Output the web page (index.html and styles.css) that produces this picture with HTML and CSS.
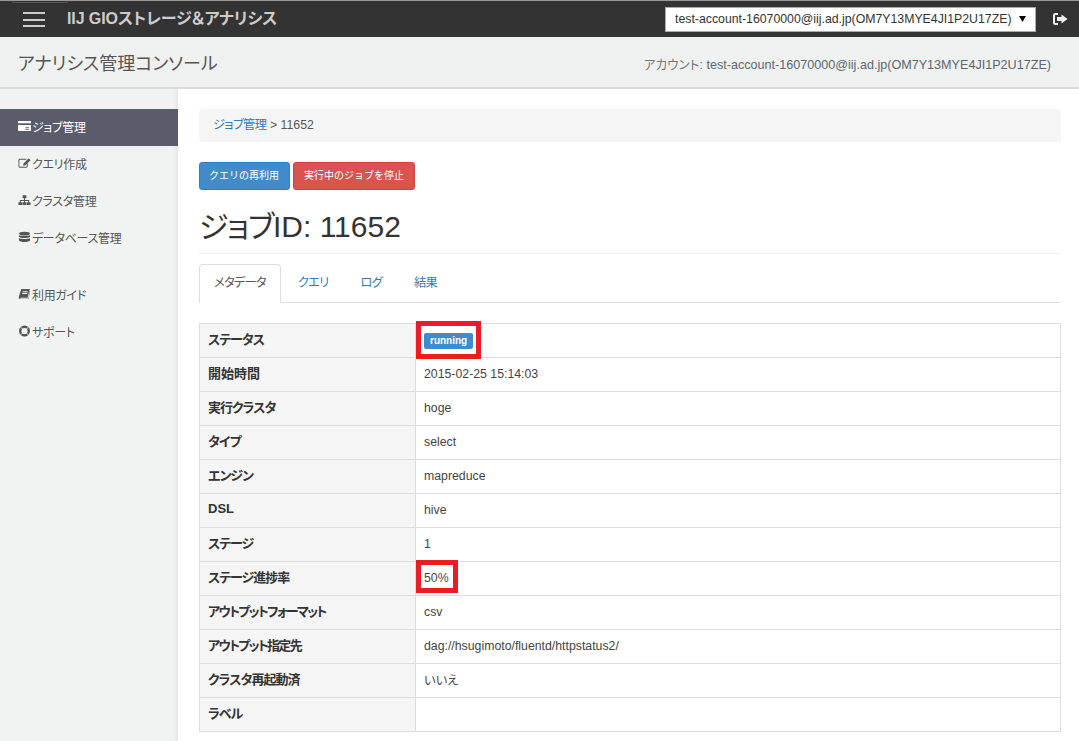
FILE: index.html
```html
<!DOCTYPE html>
<html>
	<head>
		<meta charset="UTF-8">
		<title>ジョブ詳細</title>
		<link rel="stylesheet" href="styles.css">
	</head>
	<body>
		<div class="navbar">
			<a href="#" class="burger"><span></span><span></span><span></span></a>
			<a href="#" class="brand">IIJ GIOストレージ＆アナリシス</a>
			<div class="account-select">
				<span>test-account-16070000@iij.ad.jp(OM7Y13MYE4JI1P2U17ZE)</span>
				<svg class="caret" viewBox="0 0 8 7"><path d="M0 0h8L4 7z"/></svg>
			</div>
			<a href="#" class="logout">
				<svg viewBox="0 0 16 14"><path d="M6 1H3.500A2.500 2.500 0 0 0 1 3.500v7A2.500 2.500 0 0 0 3.500 13H6v-2H3.500a.5.5 0 0 1-.5-.5v-7a.5.5 0 0 1 .5-.5H6z"/><path d="M9.500 2.500 15.500 7l-6 4.500V9H5V5h4.500z"/></svg>
			</a>
		</div>
		<div class="subheader">
			<h2>アナリシス管理コンソール</h2>
			<p>アカウント: <span>test-account-16070000@iij.ad.jp(OM7Y13MYE4JI1P2U17ZE)</span></p>
		</div>
		<div class="wrapper">
			<ul class="sidebar">
				<li class="current"><a href="#">
					<svg viewBox="0 0 14 12"><path d="M0 1.500A1 1 0 0 1 1 .5h12a1 1 0 0 1 1 1V3H0zM0 5h14v5.500a1 1 0 0 1-1 1H1a1 1 0 0 1-1-1zm8 2v1h4V7zm0 2v1h4V9z" fill-rule="evenodd"/></svg>ジョブ管理</a></li>
				<li><a href="#">
					<svg viewBox="0 0 14 12"><path d="M2 1.500h7v1H2a.5.5 0 0 0-.5.500v6.500A.5.5 0 0 0 2 10h7a.5.5 0 0 0 .5-.5V7l1-1v3.500A1.500 1.500 0 0 1 9 11H2A1.500 1.500 0 0 1 .5 9.500V3A1.500 1.500 0 0 1 2 1.500z"/><path d="M11.500 1 13.500 3 8 8.500 5.500 9 6 6.500z"/></svg>クエリ作成</a></li>
				<li><a href="#">
					<svg viewBox="0 0 14 12"><path d="M5 1h4v3H7.500v2H12v2.500h1.500V11.500h-4V8.500H11V7H7.500v1.500H9v3H5v-3h1.500V7H3v1.500h1.500v3h-4v-3H2V6h4.500V4H5z"/></svg>クラスタ管理</a></li>
				<li><a href="#">
					<svg viewBox="0 0 14 12"><ellipse cx="7" cy="2.300" rx="6" ry="2"/><path d="M1 3.800c1 1.500 11 1.500 12 0v2c-1 1.800-11 1.800-12 0zM1 7c1 1.500 11 1.500 12 0v2.500c-.5 2.600-11.500 2.600-12 0z"/></svg>データベース管理</a></li>
				<li class="gap"><a href="#">
					<svg viewBox="0 0 14 12"><path d="M3.500.5H13l-.5 1-2.200 8.500H3a1 1 0 0 0-.7 1h8.400l.6-1 1.200-7.500.5.500-1.700 8.500H2.500C.5 11.500.7 9.500 1 8.500zM5 3v1h5.500V3zm-.5 2v1H10V5z" fill-rule="evenodd"/></svg>利用ガイド</a></li>
				<li><a href="#">
					<svg viewBox="0 0 14 14"><circle cx="7" cy="7" r="5" fill="none" stroke="currentColor" stroke-width="2.800"/><path d="M2.500 2.500l2.500 2.500M11.500 2.500 9 5M2.500 11.500 5 9M11.500 11.500 9 9" stroke="#f1f3f3" stroke-width="1.100"/></svg>サポート</a></li>
			</ul>
			<div class="content">
				<div class="breadcrumb"><a href="#">ジョブ管理</a> &gt; 11652</div>
				<div class="actions">
					<a href="#" class="btn btn-primary">クエリの再利用</a>
					<a href="#" class="btn btn-danger">実行中のジョブを停止</a>
				</div>
				<h1><span>ジョブ</span>ID: 11652</h1>
				<ul class="tabs">
					<li class="active"><a href="#">メタデータ</a></li>
					<li><a href="#">クエリ</a></li>
					<li><a href="#">ログ</a></li>
					<li><a href="#">結果</a></li>
				</ul>
				<table class="meta">
					<tr><th>ステータス</th><td><span class="label">running</span><i class="mark mark-status"></i></td></tr>
					<tr><th class="wide">開始時間</th><td>2015-02-25 15:14:03</td></tr>
					<tr><th>実行クラスタ</th><td>hoge</td></tr>
					<tr><th>タイプ</th><td>select</td></tr>
					<tr><th>エンジン</th><td>mapreduce</td></tr>
					<tr><th class="wide">DSL</th><td>hive</td></tr>
					<tr><th>ステージ</th><td>1</td></tr>
					<tr><th>ステージ進捗率</th><td>50%<i class="mark mark-rate"></i></td></tr>
					<tr><th class="tight">アウトプットフォーマット</th><td>csv</td></tr>
					<tr><th class="tight">アウトプット指定先</th><td>dag://hsugimoto/fluentd/httpstatus2/</td></tr>
					<tr><th>クラスタ再起動済</th><td>いいえ</td></tr>
					<tr><th>ラベル</th><td></td></tr>
				</table>
			</div>
		</div>
	</body>
</html>
```
FILE: styles.css
```css
* {
	box-sizing: border-box;
}
html, body {
	height: 741px;
	overflow: hidden;
}
body {
	margin: 0;
	background-color: #fff;
	color: #333;
	font-family: "Liberation Sans", "Noto Sans CJK JP", sans-serif;
	font-size: 12.3px;
	font-feature-settings: "palt";
}
a {
	text-decoration: none;
	color: #337ab7;
}
ul {
	margin: 0;
	padding: 0;
	list-style: none;
}

/* top bar */
.navbar {
	height: 37px;
	display: flex;
	align-items: center;
	background-color: #333;
	border-top: 1px solid #999;
}
.burger {
	width: 56px;
	height: 34px;
	margin-left: 12px;
	padding: 9px 11px;
	display: flex;
	flex-direction: column;
	justify-content: space-between;
	border-top: 1px solid #555;
}
.burger span {
	display: block;
	width: 22px;
	height: 2px;
	background-color: #ccc;
}
.brand {
	margin-left: -1px;
	padding-bottom: 4px;
	color: #ccc;
	font-size: 16px;
	font-weight: bold;
	letter-spacing: -.1px;
}
.account-select {
	width: 371px;
	height: 25px;
	margin-left: auto;
	padding: 0 9px;
	display: flex;
	align-items: center;
	justify-content: space-between;
	background-color: #fff;
	border: 1px solid #aaa;
}
.caret {
	width: 7px;
	height: 6px;
}
.logout {
	margin: 0 11px 0 16px;
	display: flex;
	color: #eee;
}
.logout svg {
	width: 16px;
	height: 14px;
	fill: #eee;
}

/* page title */
.subheader {
	height: 52px;
	padding: 0 28px 0 18px;
	display: flex;
	align-items: center;
	justify-content: space-between;
	background-color: #eff1f1;
	border-bottom: 2px solid #d9dbdb;
}
.subheader h2 {
	margin: 0;
	color: #555;
	font-size: 18px;
	font-weight: normal;
}
.subheader p {
	margin: 2px 0 0;
	color: #777;
	font-size: 12.6px;
}
.subheader p span {
	color: #5c6670;
}

.wrapper {
	display: flex;
	height: 652px;
}

/* sidebar */
.sidebar {
	width: 178px;
	flex-shrink: 0;
	padding-top: 20px;
	background-color: #f1f3f3;
	box-shadow: inset -6px 0 5px -4px #e2e4e4;
}
.sidebar li a {
	height: 37px;
	padding: 0 0 3px 18px;
	display: flex;
	align-items: center;
	color: #555;
	font-size: 12px;
	letter-spacing: -.3px;
}
.sidebar li svg {
	width: 13px;
	height: 12px;
	margin-right: 1px;
	fill: currentColor;
}
.sidebar li.current a {
	background-color: #5a5b6b;
	color: #fff;
}
.sidebar li.gap {
	margin-top: 20px;
}

/* main */
.content {
	flex: 1;
	padding: 20px 18px 0 21px;
}
.breadcrumb {
	height: 33px;
	padding: 0 14px;
	line-height: 32px;
	background-color: #f5f5f5;
	border-radius: 4px;
	color: #555;
}
.breadcrumb a {
	letter-spacing: -.6px;
}
.actions {
	margin-top: 20px;
	display: flex;
	gap: 3px;
}
.btn {
	height: 28px;
	padding: 0 10px;
	line-height: 26px;
	border: 1px solid transparent;
	border-radius: 3px;
	color: #fff;
	font-size: 10px;
	font-feature-settings: normal;
}
.btn-primary {
	width: 91px;
	padding: 0 9px;
	background-color: #428bca;
	border-color: #357ebd;
}
.btn-danger {
	width: 122px;
	background-color: #d9534f;
	border-color: #d43f3a;
}
h1 {
	margin: 0;
	padding: 19px 0 8px;
	height: 64px;
	font-size: 30px;
	font-weight: normal;
	line-height: 36px;
	border-bottom: 1px solid #eee;
}
h1 span {
	letter-spacing: -1.3px;
}
.tabs {
	margin-top: 10px;
	display: flex;
	height: 39px;
	border-bottom: 1px solid #ddd;
}
.tabs li a {
	display: block;
	height: 39px;
	padding: 0 14px;
	margin-right: 2px;
	line-height: 37px;
	letter-spacing: -.8px;
	border: 1px solid transparent;
	border-radius: 4px 4px 0 0;
}
.tabs li.active a {
	color: #555;
	background-color: #fff;
	border-color: #ddd #ddd #fff;
}
.meta {
	width: 100%;
	margin-top: 20px;
	border-collapse: collapse;
	table-layout: fixed;
}
.meta th, .meta td {
	height: 34px;
	padding: 0 8px 2px;
	text-align: left;
	border: 1px solid #ddd;
}
.meta th {
	width: 216px;
	padding-bottom: 4px;
	background-color: #f5f5f5;
	color: #333;
	font-size: 13px;
	letter-spacing: -1px;
}
.meta th.wide {
	letter-spacing: 0;
}
.meta th.tight {
	letter-spacing: -1.7px;
}
.meta td {
	position: relative;
	color: #444;
}
.label {
	display: inline-block;
	margin-top: 3px;
	padding: 3px 6px;
	background-color: #428bca;
	border-radius: 2px;
	color: #fff;
	font-size: 10px;
	font-weight: bold;
	line-height: 10px;
	vertical-align: middle;
}

/* red boxes drawn over the cells */
.mark {
	position: absolute;
	left: 0;
	border: 5px solid #ed1c24;
}
.mark-status {
	top: -3px;
	width: 65px;
	height: 38px;
}
.mark-rate {
	top: -2px;
	width: 42px;
	height: 33px;
}
```
